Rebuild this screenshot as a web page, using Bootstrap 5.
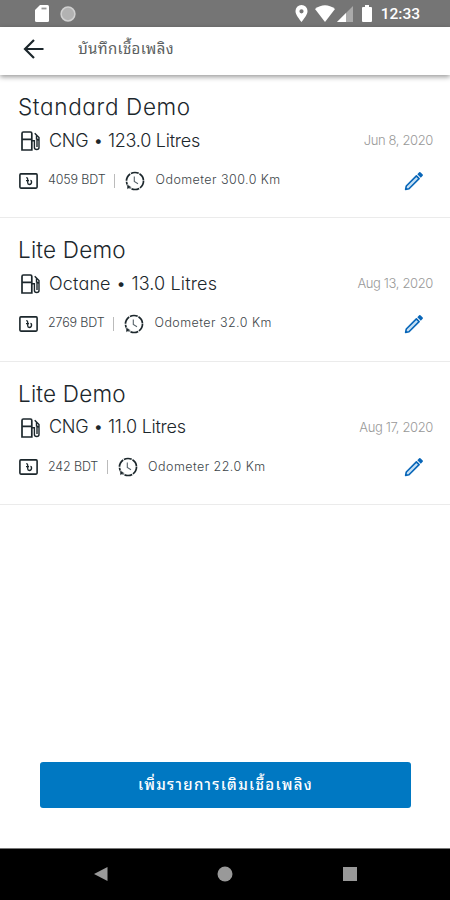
<!DOCTYPE html>
<html lang="th">
<head>
<meta charset="utf-8">
<meta name="viewport" content="width=device-width, initial-scale=1">
<title>บันทึกเชื้อเพลิง</title>
<link href="https://cdn.jsdelivr.net/npm/bootstrap@5.3.0/dist/css/bootstrap.min.css" rel="stylesheet">
<style>
body { font-family: Inter, "Noto Sans Thai Looped", Loma, Garuda, Waree, "Noto Sans Thai", "Noto Sans", sans-serif; font-feature-settings: "cv11"; color: #1c272c; background: #fff; }
svg { display: block; flex: none; }
.screen { height: 900px; overflow: hidden; }
.status { height: 27px; background: #757575; color: #fff; padding: 0 30px 0 35px; }
.wifi { margin-left: 7px; }
.signal { margin-left: 2px; }
.clock { font: 500 15.5px/27px Roboto, sans-serif; margin-left: 8px; padding-top: 1px; }
.appbar { height: 48px; padding: 0 0 4px 23px; box-shadow: 0 2px 5px rgba(0,0,0,.4); }
.appbar-title { font-size: 15px; line-height: 20px; margin-left: 34px; letter-spacing: .35px; color: #5a5e60; }
.entry { height: 143.5px; padding: 19px 17px 0 18px; border-bottom: 1px solid #ebebeb; }
.entry:first-of-type { height: 143px; }
.entry-name { font-size: 22.5px; line-height: 25px; font-weight: 300; letter-spacing: .2px; }
.entry:first-of-type .entry-name { letter-spacing: .65px; }
.fuel { height: 24px; margin-top: 9px; padding-left: 3px; }
.fuel svg { margin-top: 2px; }
.fuel-text { font-size: 18px; line-height: 24px; font-weight: 300; margin-left: 8px; letter-spacing: -.25px; padding-top: 1px; }
.octane .fuel-text { letter-spacing: .15px; }
.date { font-size: 13px; line-height: 20px; font-weight: 300; color: #999; letter-spacing: -.36px; }
.details { height: 24px; margin-top: 16.5px; padding-left: 1px; font-size: 12.5px; font-weight: 300; color: #3d4549; }
.cost { margin-left: 10px; letter-spacing: -.15px; }
.rule { width: 1px; height: 14px; background: #bbb; margin: 0 10px 0 9px; }
.odo { margin-left: 10px; letter-spacing: .45px; }
.edit { margin-left: auto; margin-right: 9px; }
.add { width: 371px; height: 46px; margin: auto 39px 40px 40px; background: #0078c2; color: #fff; border-radius: 3px; font-size: 15px; font-weight: 500; letter-spacing: 1.3px; }
.add:hover { background: #006cb0; color: #fff; }
.navkeys { height: 52px; background: #000; border-top: 1px solid #777; padding: 0 92px 1px; }
</style>
<script src="https://cdn.jsdelivr.net/npm/bootstrap@5.3.0/dist/js/bootstrap.bundle.min.js"></script>
</head>
<body>
<svg width="0" height="0" class="position-absolute" aria-hidden="true">
  <symbol id="pump" viewBox="0 0 20 20"><g fill="none" stroke="#1c272c" stroke-width="1.7"><path d="M2.400 1h7q1.400 0 1.400 1.400V19H1V2.400Q1 1 2.400 1ZM1 8.300h9.800"/><path d="M11 9.800h2.400v6.700q0 2 2.300 2t2.300-2V6.500l-4.300-4.300M15.500 4.500v3.500l2.200 1M16 9v7" stroke-width="1.400"/></g></symbol>
  <symbol id="money" viewBox="0 0 19 16"><rect x=".9" y=".9" width="17.200" height="14.200" rx="1" fill="none" stroke="#1c272c" stroke-width="1.600"/><path d="M7.200 4.700q1.500 0 1.500 1.400v3.700q0 1.700 1.600 1.700 2.300 0 2.300-2.700 0-1.300-1.200-1.300M7 7.600h3" fill="none" stroke="#1c272c" stroke-width="1.300"/></symbol>
  <symbol id="history" viewBox="0 0 20 20"><circle cx="10" cy="10" r="8.500" fill="none" stroke="#1c272c" stroke-width="1.700" stroke-dasharray="8 .9"/><path d="M2 18.300V13.300L6.800 16.200Z" fill="#1c272c" stroke="#fff" stroke-width=".5"/><path d="M9.300 5.500v5l3.700 2.200" fill="none" stroke="#56626a" stroke-width="1.100"/></symbol>
  <symbol id="pencil" viewBox="0 0 20 20"><path d="M1.600 18.400l.7-3.400L12.400 4.900l2.700 2.700L5 17.700Z" fill="#c6e0f5" stroke="#0866b8" stroke-width="1.600" stroke-linejoin="round"/><path d="M13.300 3.200l1.900-1.900q.6-.6 1.200 0l2.300 2.300q.6.600 0 1.200l-1.900 1.900Z" fill="#0866b8"/></symbol>
</svg>
<main class="screen d-flex flex-column">
  <div class="status d-flex align-items-center">
    <svg width="14" height="17" viewBox="0 0 14 17"><path d="M5 0h7.500Q14 0 14 1.500v14q0 1.500-1.500 1.500h-11Q0 17 0 15.500V5Z" fill="#fff"/><path d="M6.500 3.500h5" stroke="#999" stroke-width="1.800"/></svg>
    <svg class="ms-2" width="24" height="18" viewBox="0 0 24 18"><circle cx="11" cy="9" r="6.900" fill="#b2b2b2" stroke="#d0d0d0" stroke-width="1.500"/></svg>
    <svg class="ms-auto" width="13" height="17" viewBox="0 0 13 17"><path fill="#fff" fill-rule="evenodd" d="M6.500 0A6 6 0 0 1 12.500 6.200C12.500 10 8.500 14 6.500 17 4.500 14 .5 10 .5 6.200A6 6 0 0 1 6.500 0Zm0 4.200a2.100 2.100 0 1 0 0 4.200 2.100 2.100 0 0 0 0-4.200Z"/></svg>
    <svg class="wifi" width="20" height="17" viewBox="0 0 20 17"><path d="M0 4Q10-3.500 20 4L10 17Z" fill="#fff"/></svg>
    <svg class="signal" width="16" height="16" viewBox="0 0 16 16"><path d="M0 16L16 0v16Z" fill="#aaa"/><path d="M0 16L9 7V16Z" fill="#fff"/></svg>
    <svg class="ms-2" width="12" height="17" viewBox="0 0 12 17"><path d="M4 0h4v2h2q1 0 1 1v13q0 1-1 1H2q-1 0-1-1V3q0-1 1-1h2Z" fill="#fff"/></svg>
    <span class="clock">12:33</span>
  </div>
  <header class="appbar d-flex align-items-center">
    <svg width="21" height="20" viewBox="0 0 21 20"><path d="M20.500 10H2M11 1L2 10l9 9" fill="none" stroke="#1c272c" stroke-width="2.200"/></svg>
    <span class="appbar-title">บันทึกเชื้อเพลิง</span>
  </header>
  <section class="entry">
    <div class="entry-name">Standard Demo</div>
    <div class="fuel d-flex align-items-center"><svg width="20" height="20"><use href="#pump"/></svg><span class="fuel-text">CNG • 123.0 Litres</span><span class="date ms-auto">Jun 8, 2020</span></div>
    <div class="details d-flex align-items-center"><svg width="19" height="16"><use href="#money"/></svg><span class="cost">4059 BDT</span><span class="rule"></span><svg width="20" height="20"><use href="#history"/></svg><span class="odo">Odometer 300.0 Km</span><svg class="edit" width="20" height="20"><use href="#pencil"/></svg></div>
  </section>
  <section class="entry octane">
    <div class="entry-name">Lite Demo</div>
    <div class="fuel d-flex align-items-center"><svg width="20" height="20"><use href="#pump"/></svg><span class="fuel-text">Octane • 13.0 Litres</span><span class="date ms-auto">Aug 13, 2020</span></div>
    <div class="details d-flex align-items-center"><svg width="19" height="16"><use href="#money"/></svg><span class="cost">2769 BDT</span><span class="rule"></span><svg width="20" height="20"><use href="#history"/></svg><span class="odo">Odometer 32.0 Km</span><svg class="edit" width="20" height="20"><use href="#pencil"/></svg></div>
  </section>
  <section class="entry">
    <div class="entry-name">Lite Demo</div>
    <div class="fuel d-flex align-items-center"><svg width="20" height="20"><use href="#pump"/></svg><span class="fuel-text">CNG • 11.0 Litres</span><span class="date ms-auto">Aug 17, 2020</span></div>
    <div class="details d-flex align-items-center"><svg width="19" height="16"><use href="#money"/></svg><span class="cost">242 BDT</span><span class="rule"></span><svg width="20" height="20"><use href="#history"/></svg><span class="odo">Odometer 22.0 Km</span><svg class="edit" width="20" height="20"><use href="#pencil"/></svg></div>
  </section>
  <button type="button" class="btn add border-0 p-0">เพิ่มรายการเติมเชื้อเพลิง</button>
  <nav class="navkeys d-flex align-items-center justify-content-between">
    <svg width="16" height="16" viewBox="0 0 16 16"><path d="M2 8L15.500 1v14Z" fill="#999"/></svg>
    <svg width="16" height="16" viewBox="0 0 16 16"><circle cx="8" cy="8" r="7.500" fill="#999"/></svg>
    <svg width="16" height="16" viewBox="0 0 16 16"><path d="M1 1h14v14H1Z" fill="#999"/></svg>
  </nav>
</main>
</body>
</html>
